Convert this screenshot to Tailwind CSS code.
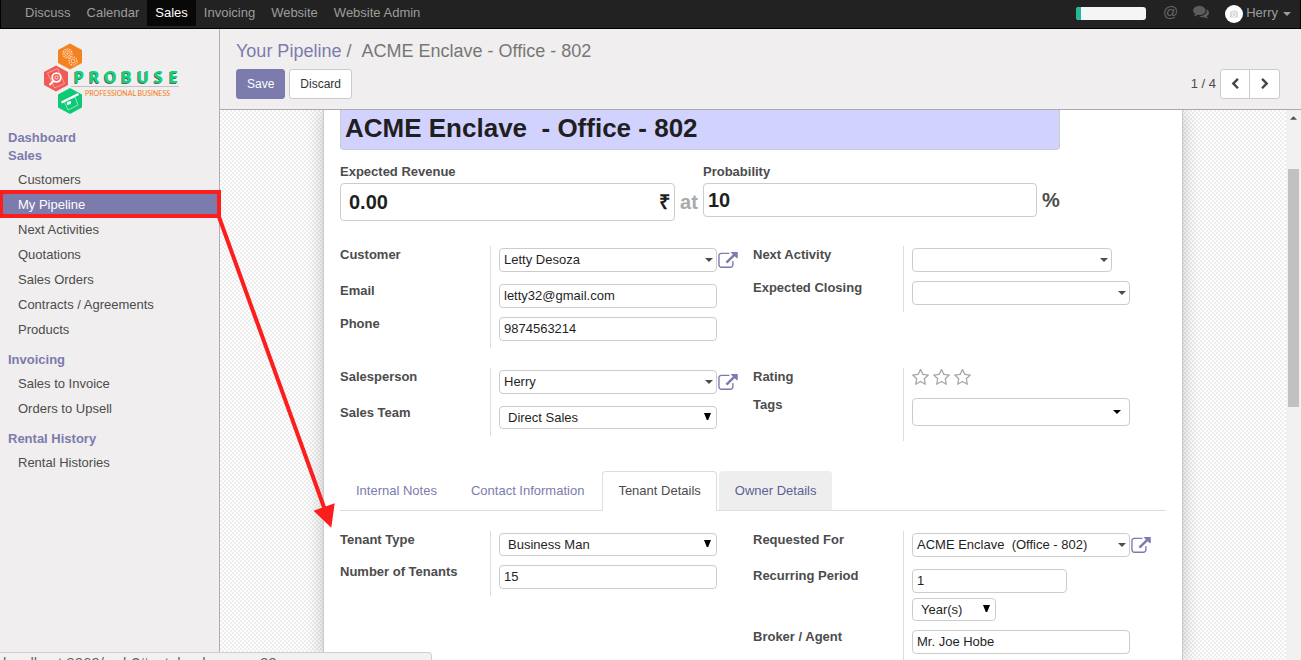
<!DOCTYPE html>
<html lang="en">
<head>
<meta charset="utf-8">
<meta name="viewport" content="width=device-width, initial-scale=1">
<title>ACME Enclave - Office - 802</title>
<script src="https://cdn.jsdelivr.net/npm/@tailwindcss/browser@4"></script>
</head>
<body class="relative flex h-screen flex-col overflow-hidden bg-white font-['Liberation_Sans',Arial,sans-serif] text-[13px] leading-[18px] text-[#4c4c4c]">

<!-- Shared symbols -->
<svg class="hidden" aria-hidden="true">
  <symbol id="ext" viewBox="0 64 1792 1472"><path d="M1408 928v320q0 119-84.5 203.5t-203.5 84.5h-832q-119 0-203.5-84.5t-84.5-203.5v-832q0-119 84.5-203.5t203.5-84.5h704q14 0 23 9t9 23v64q0 14-9 23t-23 9h-704q-66 0-113 47t-47 113v832q0 66 47 113t113 47h832q66 0 113-47t47-113v-320q0-14 9-23t23-9h64q14 0 23 9t9 23zm384-864v512q0 26-19 45t-45 19-45-19l-176-176-652 652q-10 10-23 10t-23-10l-114-114q-10-10-10-23t10-23l652-652-176-176q-19-19-19-45t19-45 45-19h512q26 0 45 19t19 45z"/></symbol>
  <symbol id="star" viewBox="64 64 1664 1664"><path d="M1201 1004l306-297-422-62-189-382-189 382-422 62 306 297-73 421 378-199 377 199zm527-357q0 22-26 48l-363 354 86 500q1 7 1 20 0 50-41 50-19 0-40-12l-449-236-449 236q-22 12-40 12-21 0-31.5-14.5t-10.5-35.5q0-6 2-20l86-500-364-354q-25-27-25-48 0-37 56-46l502-73 225-455q19-41 49-41t49 41l225 455 502 73q56 9 56 46z"/></symbol>
  <symbol id="caret" viewBox="0 0 8 4"><path d="M0 0h8L4 4z"/></symbol>
  <symbol id="tri" viewBox="0 0 7 7"><path d="M0 0h7L4.200 7H2.800z"/></symbol>
</svg>

<header class="flex h-[29px] shrink-0 items-start justify-between border-x border-b border-black bg-[#222] text-[#9d9d9d]">
  <nav class="flex pl-4 leading-[26px]">
    <a href="#" class="px-2">Discuss</a>
    <a href="#" class="px-2">Calendar</a>
    <a href="#" class="bg-[#080808] px-2 text-white">Sales</a>
    <a href="#" class="px-2">Invoicing</a>
    <a href="#" class="px-2">Website</a>
    <a href="#" class="px-2">Website Admin</a>
  </nav>
  <div class="flex h-[27px] items-center pr-[9px]">
    <div class="mr-[17px] h-[13px] w-[70px] overflow-hidden rounded-[3px] bg-[#f5f5f5]"><div class="h-full w-[5px] bg-[#21b799]"></div></div>
    <button type="button" aria-label="Mentions" class="mr-[15px] pb-1 text-[15px] leading-[22px] text-[#666]">@</button>
    <button type="button" aria-label="Conversations" class="mr-4"><svg class="mb-[6px] block size-4 fill-[#5c5c5c]" viewBox="0 0 1792 1664"><path d="M1408 768q0 139-94 257t-256.5 186.5-353.5 68.5q-86 0-176-16-124 88-278 128-36 9-86 16h-3q-11 0-20.500-8t-11.500-21q-1-3-1-6.500t.5-6.500 2-6l2.500-5 3.500-5.500 4-5 4.500-5 4-4.500q5-6 23-25t26-29.500 22.500-29 25-38.500 20.500-44q-124-72-195-177t-71-224q0-139 94-257t256.500-186.500 353.500-68.500 353.500 68.500 256.500 186.500 94 257zm384 256q0 120-71 224.500t-195 176.500q10 24 20.500 44t25 38.500 22.500 29 26 29.500 23 25q1 1 4 4.500t4.500 5 4 5 3.500 5.500l2.500 5 2 6 .5 6.500-1 6.500q-3 14-13 22t-22 7q-50-7-86-16-154-40-278-128-90 16-176 16-271 0-472-132 58 4 88 4 161 0 309-45t264-129q125-92 192-212t67-254q0-77-23-152 129 71 204 178t75 230z"/></svg></button>
    <button type="button" class="flex items-center">
      <svg class="mr-[3px] size-[18px]" viewBox="0 0 18 18"><circle cx="9" cy="9" r="9" fill="#fff"/><path d="M5 6.500h2l1-1h2.500l1 1H13v6H5z" fill="#d9d9d9"/><circle cx="9" cy="9.500" r="2.200" fill="#fff"/><circle cx="9" cy="9.500" r="1.300" fill="#d0d0d0"/></svg>
      <span class="pb-px">Herry</span>
      <svg class="ml-[5px] h-1 w-2 fill-[#9d9d9d]"><use href="#caret"/></svg>
    </button>
  </div>
</header>

<div class="flex min-h-0 flex-1">
  <aside class="w-[220px] shrink-0 border-r border-[#afafb6] bg-[#f0eeee]">
    <svg class="block h-[100px] w-full" viewBox="0 29 219 100" role="img" aria-label="Probuse Professional Business">
      <path d="M70 43.500l12 6.500v13l-12 6.500-12-6.500V50z" fill="#f58220"/>
      <path d="M56 65.500l12 6.500v13l-12 6.500-12-6.500V72z" fill="#f15b57"/>
      <path d="M70 88l12 6.500v13L70 114l-12-6.500v-13z" fill="#0fca75"/>
      <g fill="none" stroke="#fff" opacity=".75">
        <circle cx="67.500" cy="53.500" r="4.500" stroke-width="1.200" stroke-dasharray="1.500 1"/><circle cx="67.500" cy="53.500" r="2.800" stroke-width=".8"/><circle cx="67.500" cy="53.500" r=".7"/>
        <circle cx="73" cy="61" r="4" stroke-width="1.200" stroke-dasharray="1.400 1"/><circle cx="73" cy="61" r="2" stroke-width=".8"/>
        <path d="M47.500 73l10-4.500 7 15-10 4.500z" stroke-width=".8" opacity=".7"/>
      </g>
      <circle cx="56.500" cy="77.500" r="4.300" fill="#f15b57" stroke="#fff" stroke-width="1.800"/><circle cx="56.500" cy="77.500" r="1.600" fill="none" stroke="#fff" stroke-width=".8"/><path d="M53.500 81l-4 4" stroke="#fff" stroke-width="2"/>
      <path d="M64 101l11-4 3 8-10 5z" fill="none" stroke="#9be8c6" stroke-width=".9"/><path d="M61.500 102.500l17-8.500" stroke="#fff" stroke-width="2.300"/><path d="M67 102l4-1v3l-4 1z" fill="#fff"/>
      <g font-family="Open Sans, sans-serif" font-weight="700" font-size="16">
        <text x="73 88 103 120 136 153 168" y="84" fill="#566">PROBUSE</text>
        <text x="74 89 104 121 137 154 169" y="83" fill="#08d877">PROBUSE</text>
      </g>
      <path d="M71 86.500h108" stroke="#c2c2c2"/>
      <text x="85" y="96" font-family="Lato, sans-serif" font-size="7" fill="#f07c12">PROFESSIONAL BUSINESS</text>
    </svg>
    <nav>
      <a href="#" class="block pl-2 font-bold text-[#7c7bad]">Dashboard</a>
      <h2 class="mb-[2px] pl-2 font-bold text-[#7c7bad]">Sales</h2>
      <ul class="mb-[9px] leading-[25px]">
        <li><a href="#" class="block pl-[18px]">Customers</a></li>
        <li><a href="#" class="block bg-[#7c7bad] pl-[18px] text-white">My Pipeline</a></li>
        <li><a href="#" class="block pl-[18px]">Next Activities</a></li>
        <li><a href="#" class="block pl-[18px]">Quotations</a></li>
        <li><a href="#" class="block pl-[18px]">Sales Orders</a></li>
        <li><a href="#" class="block pl-[18px]">Contracts / Agreements</a></li>
        <li><a href="#" class="block pl-[18px]">Products</a></li>
      </ul>
      <h2 class="mb-[2px] pl-2 font-bold text-[#7c7bad]">Invoicing</h2>
      <ul class="mb-[9px] leading-[25px]">
        <li><a href="#" class="block pl-[18px]">Sales to Invoice</a></li>
        <li><a href="#" class="block pl-[18px]">Orders to Upsell</a></li>
      </ul>
      <h2 class="mb-[2px] pl-2 font-bold text-[#7c7bad]">Rental History</h2>
      <ul class="leading-[25px]">
        <li><a href="#" class="block pl-[18px]">Rental Histories</a></li>
      </ul>
    </nav>
  </aside>

  <div class="flex min-w-0 flex-1 flex-col">
    <div class="flex h-[81px] shrink-0 flex-col justify-between border-b border-[#a9a9ae] bg-[#f0eeee] pt-[10px] pr-[21px] pb-[10px] pl-4">
      <div class="flex gap-[10px] text-[18px] leading-6 text-[#777]"><span><a href="#" class="text-[#7c7bad]">Your Pipeline</a> /</span><span>ACME Enclave - Office - 802</span></div>
      <div class="flex items-center justify-between">
        <div class="flex gap-1 text-[12px]">
          <button type="button" class="h-[30px] rounded-[3px] border border-[#7c7bad] bg-[#7c7bad] px-[10px] text-white">Save</button>
          <button type="button" class="h-[30px] rounded-[3px] border border-[#ccc] bg-white px-[10px] text-[#333]">Discard</button>
        </div>
        <div class="flex items-center gap-1">
          <span class="pb-px">1 / 4</span>
          <div class="flex h-[30px] rounded-[3px] border border-[#ccc] bg-white">
            <button type="button" aria-label="Previous" class="flex w-[29px] items-center justify-center border-r border-[#ccc]"><svg class="size-3 fill-[#444]" viewBox="0 0 1792 1792"><path d="M1427 301l-531 531 531 531q19 19 19 45t-19 45l-166 166q-19 19-45 19t-45-19l-742-742q-19-19-19-45t19-45l742-742q19-19 45-19t45 19l166 166q19 19 19 45t-19 45z"/></svg></button>
            <button type="button" aria-label="Next" class="flex w-[29px] items-center justify-center"><svg class="size-3 fill-[#444]" viewBox="0 0 1792 1792"><path d="M1363 877l-742 742q-19 19-45 19t-45-19l-166-166q-19-19-19-45t19-45l531-531-531-531q-19-19-19-45t19-45l166-166q19-19 45-19t45 19l742 742q19 19 19 45t-19 45z"/></svg></button>
          </div>
        </div>
      </div>
    </div>

    <div class="flex min-h-0 flex-1">
      <main class="min-w-0 flex-1 overflow-hidden bg-[conic-gradient(#eee_25%,#fff_0_50%,#eee_0_75%,#fff_0)] bg-[length:4px_4px]">
        <form class="mx-auto min-h-full max-w-[860px] border-x border-[#c8c8d3] bg-white px-4 text-[#1f1f1f] shadow-[0_0_18px_rgba(0,0,0,0.22)]">
          <input aria-label="Opportunity" value="ACME Enclave  - Office - 802" class="block h-10 w-[720px] rounded-b-[4px] border border-t-0 border-[#ccc] bg-[#d2d2ff] px-1 pb-[2px] text-[26px] font-bold">

          <div class="mt-3 flex">
            <div class="w-[335px]">
              <label for="rev" class="block h-[21px] leading-5 font-bold text-[#4c4c4c]">Expected Revenue</label>
              <div class="flex h-[38px] items-center rounded-[4px] border border-[#ccc] pr-1 pl-2 text-[20px] font-bold">
                <input id="rev" value="0.00" class="min-w-0 flex-1"><span>₹</span>
              </div>
            </div>
            <span class="mt-7 w-7 text-center text-[20px] leading-6 font-bold text-[#aaa]">at</span>
            <div class="w-[334px]">
              <label for="prob" class="block h-[21px] leading-5 font-bold text-[#4c4c4c]">Probability</label>
              <input id="prob" value="10" class="block h-[34px] w-full rounded-[4px] border border-[#ccc] px-1 text-[20px] font-bold">
            </div>
            <span class="mt-[26px] ml-[5px] text-[20px] leading-6 font-bold text-[#4c4c4c]">%</span>
          </div>

          <!-- Customer / activity -->
          <div class="mt-[25px] grid grid-cols-2 items-start">
            <div class="grid grid-cols-[150px_1fr]">
              <label for="cust" class="font-bold text-[#4c4c4c]">Customer</label>
              <div class="flex h-9 items-start gap-px border-l border-[#ddd] pt-[2px] pl-2">
                <div class="flex h-6 w-[218px] items-center rounded-[4px] border border-[#ccc] pr-[3px] pl-1"><input id="cust" value="Letty Desoza" class="min-w-0 flex-1"><svg class="h-1 w-2 fill-[#4c4c4c]"><use href="#caret"/></svg></div>
                <button type="button" aria-label="Open customer" class="flex h-6 items-center"><svg class="h-4 w-5 fill-[#7c7bad]"><use href="#ext"/></svg></button>
              </div>
              <label for="mail" class="font-bold text-[#4c4c4c]">Email</label>
              <div class="h-[33px] border-l border-[#ddd] pt-[2px] pl-2"><input id="mail" value="letty32@gmail.com" class="block h-6 w-[218px] rounded-[4px] border border-[#ccc] px-1 pb-[2px]"></div>
              <label for="phone" class="font-bold text-[#4c4c4c]">Phone</label>
              <div class="h-[33px] border-l border-[#ddd] pt-[2px] pl-2"><input id="phone" value="9874563214" class="block h-6 w-[218px] rounded-[4px] border border-[#ccc] px-1 pb-[2px]"></div>
            </div>
            <div class="grid grid-cols-[150px_1fr]">
              <label for="next" class="font-bold text-[#4c4c4c]">Next Activity</label>
              <div class="h-[33px] border-l border-[#ddd] pt-[2px] pl-2">
                <div class="flex h-6 w-[200px] items-center rounded-[4px] border border-[#ccc] pr-[3px] pl-1"><input id="next" class="min-w-0 flex-1"><svg class="h-1 w-2 fill-[#4c4c4c]"><use href="#caret"/></svg></div>
              </div>
              <label for="close" class="font-bold text-[#4c4c4c]">Expected Closing</label>
              <div class="h-[33px] border-l border-[#ddd] pt-[2px] pl-2">
                <div class="flex h-6 w-[218px] items-center rounded-[4px] border border-[#ccc] pr-[3px] pl-1"><input id="close" class="min-w-0 flex-1"><svg class="h-1 w-2 fill-[#4c4c4c]"><use href="#caret"/></svg></div>
              </div>
            </div>
          </div>

          <!-- Salesperson / rating -->
          <div class="mt-5 grid grid-cols-2 items-start">
            <div class="grid grid-cols-[150px_1fr]">
              <label for="person" class="font-bold text-[#4c4c4c]">Salesperson</label>
              <div class="flex h-9 items-start gap-px border-l border-[#ddd] pt-[2px] pl-2">
                <div class="flex h-6 w-[218px] items-center rounded-[4px] border border-[#ccc] pr-[3px] pl-1"><input id="person" value="Herry" class="min-w-0 flex-1"><svg class="h-1 w-2 fill-[#4c4c4c]"><use href="#caret"/></svg></div>
                <button type="button" aria-label="Open salesperson" class="flex h-6 items-center"><svg class="h-4 w-5 fill-[#7c7bad]"><use href="#ext"/></svg></button>
              </div>
              <label for="team" class="font-bold text-[#4c4c4c]">Sales Team</label>
              <div class="h-8 border-l border-[#ddd] pt-[2px] pl-2">
                <div class="relative w-[218px]"><select id="team" class="block h-[23px] w-full appearance-none rounded-[4px] border border-[#ccc] bg-white px-2"><option>Direct Sales</option></select><svg class="pointer-events-none absolute top-[7px] right-[6px] size-[7px] fill-black"><use href="#tri"/></svg></div>
              </div>
            </div>
            <div class="grid grid-cols-[150px_1fr]">
              <span class="font-bold text-[#4c4c4c]">Rating</span>
              <div class="flex h-7 gap-1 border-l border-[#ddd] pt-px pl-2">
                <button type="button" aria-label="1 star" class="h-[17px]"><svg class="size-[17px] fill-[#a8a8a8]"><use href="#star"/></svg></button>
                <button type="button" aria-label="2 stars" class="h-[17px]"><svg class="size-[17px] fill-[#a8a8a8]"><use href="#star"/></svg></button>
                <button type="button" aria-label="3 stars" class="h-[17px]"><svg class="size-[17px] fill-[#a8a8a8]"><use href="#star"/></svg></button>
              </div>
              <label for="tags" class="font-bold text-[#4c4c4c]">Tags</label>
              <div class="h-[45px] border-l border-[#ddd] pt-[2px] pl-2">
                <div class="flex h-7 w-[218px] items-center rounded-[4px] border border-[#ccc] pr-2 pl-1"><input id="tags" class="min-w-0 flex-1"><svg class="h-1 w-2 fill-black"><use href="#caret"/></svg></div>
              </div>
            </div>
          </div>

          <div role="tablist" class="mt-[30px] flex h-10 gap-[2px] border-b border-[#ddd] text-[#7c7bad]">
            <button type="button" role="tab" class="h-10 rounded-t-[4px] px-4">Internal Notes</button>
            <button type="button" role="tab" class="h-10 rounded-t-[4px] px-4">Contact Information</button>
            <button type="button" role="tab" aria-selected="true" class="h-10 rounded-t-[4px] border border-b-0 border-[#ddd] bg-white px-[15px] pb-[2px] text-[#4c4c4c]">Tenant Details</button>
            <button type="button" role="tab" class="h-[39px] rounded-t-[4px] bg-[#eee] px-4 text-[#5f5e97]">Owner Details</button>
          </div>

          <!-- Tenant details -->
          <div class="mt-5 grid grid-cols-2 items-start">
            <div class="grid grid-cols-[150px_1fr]">
              <label for="ttype" class="font-bold text-[#4c4c4c]">Tenant Type</label>
              <div class="h-8 border-l border-[#ddd] pt-[2px] pl-2">
                <div class="relative w-[218px]"><select id="ttype" class="block h-[23px] w-full appearance-none rounded-[4px] border border-[#ccc] bg-white px-2"><option>Business Man</option></select><svg class="pointer-events-none absolute top-[7px] right-[6px] size-[7px] fill-black"><use href="#tri"/></svg></div>
              </div>
              <label for="count" class="font-bold text-[#4c4c4c]">Number of Tenants</label>
              <div class="h-[33px] border-l border-[#ddd] pt-[2px] pl-2"><input id="count" value="15" class="block h-6 w-[218px] rounded-[4px] border border-[#ccc] px-1 pb-[2px]"></div>
            </div>
            <div class="grid grid-cols-[150px_1fr]">
              <label for="req" class="font-bold text-[#4c4c4c]">Requested For</label>
              <div class="flex h-9 items-start gap-px border-l border-[#ddd] pt-[2px] pl-2">
                <div class="flex h-6 w-[218px] items-center rounded-[4px] border border-[#ccc] pr-[3px] pl-1"><input id="req" value="ACME Enclave  (Office - 802)" class="min-w-0 flex-1"><svg class="h-1 w-2 fill-[#4c4c4c]"><use href="#caret"/></svg></div>
                <button type="button" aria-label="Open property" class="flex h-6 items-center"><svg class="h-4 w-5 fill-[#7c7bad]"><use href="#ext"/></svg></button>
              </div>
              <label for="period" class="font-bold text-[#4c4c4c]">Recurring Period</label>
              <div class="flex h-[61px] flex-col gap-[5px] border-l border-[#ddd] pt-[2px] pl-2">
                <input id="period" value="1" class="block h-6 w-[155px] rounded-[4px] border border-[#ccc] px-1 pb-[2px]">
                <div class="relative w-[84px]"><select aria-label="Period unit" class="block h-[23px] w-full appearance-none rounded-[4px] border border-[#ccc] bg-white px-2"><option>Year(s)</option></select><svg class="pointer-events-none absolute top-[7px] right-[6px] size-[7px] fill-black"><use href="#tri"/></svg></div>
              </div>
              <label for="broker" class="font-bold text-[#4c4c4c]">Broker / Agent</label>
              <div class="h-[33px] border-l border-[#ddd] pt-[2px] pl-2"><input id="broker" value="Mr. Joe Hobe" class="block h-6 w-[218px] rounded-[4px] border border-[#ccc] px-1 pb-[2px]"></div>
            </div>
          </div>
        </form>
      </main>
      <!-- Scroll bar -->
      <div class="flex w-[15px] shrink-0 flex-col items-center bg-[#f1f1f1] pt-[6px]">
        <svg class="mb-[49px] h-1 w-[7px] fill-[#505050]" viewBox="0 0 8 4"><path d="M0 4h8L4 0z"/></svg>
        <div class="h-[238px] w-[11px] bg-[#c1c1c1]"></div>
      </div>
    </div>
  </div>
</div>

<!-- Link address bubble -->
<div class="absolute bottom-0 left-0 h-2 w-[432px] overflow-hidden rounded-tr-[4px] border-t border-r border-[#d0cece] bg-[#f2f1f0] pt-px pl-[3px] text-[15px] leading-[17px] text-[#666]">localhost:8069/web?#notebook_page_22</div>

<!-- Callout frame and arrow -->
<svg class="pointer-events-none absolute top-0 left-0 h-[540px] w-[340px]" viewBox="0 0 340 540" aria-hidden="true">
  <path d="M0 190h221v28H0zM3 194v20h214v-20z" fill="#fc1d1d" fill-rule="evenodd"/>
  <path d="M219 217L325 510" stroke="#fc1d1d" stroke-width="4"/>
  <path d="M313.500 510.700L334.700 503.300 331.300 527.700z" fill="#fc1d1d"/>
</svg>
</body>
</html>
